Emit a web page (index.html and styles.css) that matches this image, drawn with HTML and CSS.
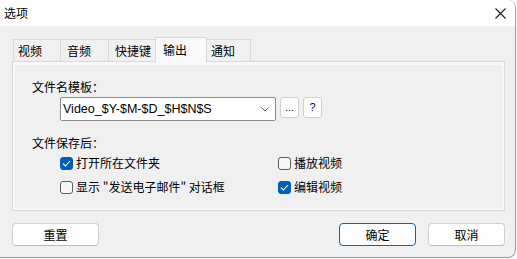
FILE: index.html
```html
<!DOCTYPE html>
<html lang="zh-CN">
<head>
<meta charset="utf-8">
<title>选项</title>
<link rel="stylesheet" href="styles.css">
</head>
<body>
<div class="window">
  <div class="titlebar">
    <span class="title">选项</span>
    <svg class="close" width="11" height="11" viewBox="0 0 11 11"><path d="M0.5 0.5 L10.5 10.5 M10.5 0.5 L0.5 10.5" stroke="#1b1b1b" stroke-width="1.1" fill="none"/></svg>
  </div>
  <div class="content">
    <div class="tabs">
      <div class="tab tab-video">视频</div>
      <div class="tab tab-audio">音频</div>
      <div class="tab tab-keys">快捷键</div>
      <div class="tab tab-output selected">输出</div>
      <div class="tab tab-notify">通知</div>
    </div>
    <div class="panel">
      <div class="page">
        <div class="label">文件名模板：</div>
        <div class="template-row">
          <div class="combo">
            <span class="combo-text">Video_$Y-$M-$D_$H$N$S</span>
            <svg class="chevron" width="8" height="5" viewBox="0 0 8 5"><path d="M0.5 0.5 L4 4 L7.5 0.5" stroke="#606060" stroke-width="1" fill="none"/></svg>
          </div>
          <button class="mini">...</button>
          <button class="mini">?</button>
        </div>
        <div class="label label-after">文件保存后：</div>
        <div class="checks">
          <div class="check"><span class="box checked"><svg width="9" height="7" viewBox="0 0 9 7"><path d="M1 3.6 L3.4 6 L8 1" stroke="#fff" stroke-width="1.1" fill="none"/></svg></span>打开所在文件夹</div>
          <div class="check"><span class="box"></span>播放视频</div>
          <div class="check"><span class="box"></span>显示 "发送电子邮件" 对话框</div>
          <div class="check"><span class="box checked"><svg width="9" height="7" viewBox="0 0 9 7"><path d="M1 3.6 L3.4 6 L8 1" stroke="#fff" stroke-width="1.1" fill="none"/></svg></span>编辑视频</div>
        </div>
      </div>
    </div>
    <div class="actions">
      <button class="btn btn-reset">重置</button>
      <div class="spacer"></div>
      <button class="btn btn-default">确定</button>
      <button class="btn">取消</button>
    </div>
  </div>
</div>
</body>
</html>
```
FILE: styles.css
```css
* { box-sizing: border-box; }
html, body { margin: 0; padding: 0; background: #ffffff; }
body {
  width: 517px;
  height: 259px;
  font-family: "Noto Sans CJK SC", "Noto Sans", sans-serif;
  font-size: 12px;
  color: #1a1a1a;
}
.window {
  width: 516px;
  height: 258px;
  background: #f0f0f0;
  border-right: 1px solid #9c9c9c;
  border-bottom: 1px solid #9c9c9c;
  border-radius: 0 8px 8px 0;
  overflow: hidden;
  display: flex;
  flex-direction: column;
}
.titlebar {
  height: 26px;
  flex: none;
  background: #ffffff;
  display: flex;
  align-items: center;
  justify-content: space-between;
  padding: 0 9px 0 4px;
}
.title { font-size: 12px; line-height: 16px; color: #000; }
.close { display: block; }

.content {
  padding: 11px 10px 0 12px;
  display: flex;
  flex-direction: column;
}
.tabs {
  display: flex;
  align-items: flex-end;
  height: 24px;
  padding-left: 2px;
}
.tab {
  height: 22px;
  margin-left: -1px;
  border: 1px solid #d9d9d9;
  border-bottom: none;
  background: #f0f0f0;
  display: flex;
  align-items: center;
  padding-left: 4px;
  line-height: 16px;
  color: #000;
}
.tab-video { width: 48px; }
.tab-audio { width: 49px; padding-left: 6px; }
.tab-keys { width: 48px; padding-left: 6px; }
.tab-output { width: 52px; padding-left: 7px; }
.tab-notify { width: 45px; padding-left: 4px; }
.tab.selected {
  height: 25px;
  margin-bottom: -1px;
  background: #f9f9f9;
  padding-bottom: 1px;
  position: relative;
  z-index: 1;
}

.panel {
  height: 150px;
  border: 1px solid #d9d9d9;
  background: #f9f9f9;
  padding: 3px 2px 2px 2px;
}
.page {
  height: 100%;
  background: #f0f0f0;
  padding: 14px 0 0 17px;
}
.label { line-height: 16px; height: 16px; color: #000; }
.template-row {
  margin: 2px 0 0 28px;
  display: flex;
  align-items: flex-start;
}
.combo {
  width: 216px;
  height: 24px;
  background: #ffffff;
  border: 1px solid #8a8a8a;
  border-radius: 2px;
  display: flex;
  align-items: center;
  justify-content: space-between;
  padding: 0 6px 0 2px;
}
.combo-text {
  font-family: "Liberation Sans", Arial, sans-serif;
  font-size: 12.5px;
  color: #000;
}
.chevron { display: block; }
.mini {
  width: 19px;
  height: 21px;
  margin-left: 4px;
  padding: 0;
  background: #fdfdfd;
  border: 1px solid #d0d0d0;
  border-radius: 3px;
  font-family: "Liberation Sans", Arial, sans-serif;
  font-size: 11px;
  color: #101050;
  line-height: 19px;
}
.label-after { margin-top: 14px; }
.checks {
  margin: 4px 0 0 28px;
  display: grid;
  grid-template-columns: 218px auto;
  grid-auto-rows: 16px;
  row-gap: 8px;
}
.check {
  display: flex;
  align-items: center;
  line-height: 16px;
  color: #000;
}
.box {
  width: 13px;
  height: 13px;
  flex: none;
  margin-right: 3px;
  border: 1px solid #5f5f5f;
  border-radius: 3px;
  background: #f6f6f6;
  display: flex;
  align-items: center;
  justify-content: center;
}
.box.checked {
  background: #005fb8;
  border-color: #005fb8;
}
.box svg { display: block; }

.actions {
  margin-top: 12px;
  display: flex;
  gap: 12px;
}
.spacer { flex: 1; }
.btn {
  width: 77px;
  height: 23px;
  padding: 0;
  background: #fdfdfd;
  border: 1px solid #d0d0d0;
  border-bottom-color: #bdbdbd;
  border-radius: 4px;
  font-family: "Noto Sans CJK SC", sans-serif;
  font-size: 12px;
  color: #000;
}
.btn-reset { width: 87px; }
.btn-default { border: 1px solid #0067c0; }
```
